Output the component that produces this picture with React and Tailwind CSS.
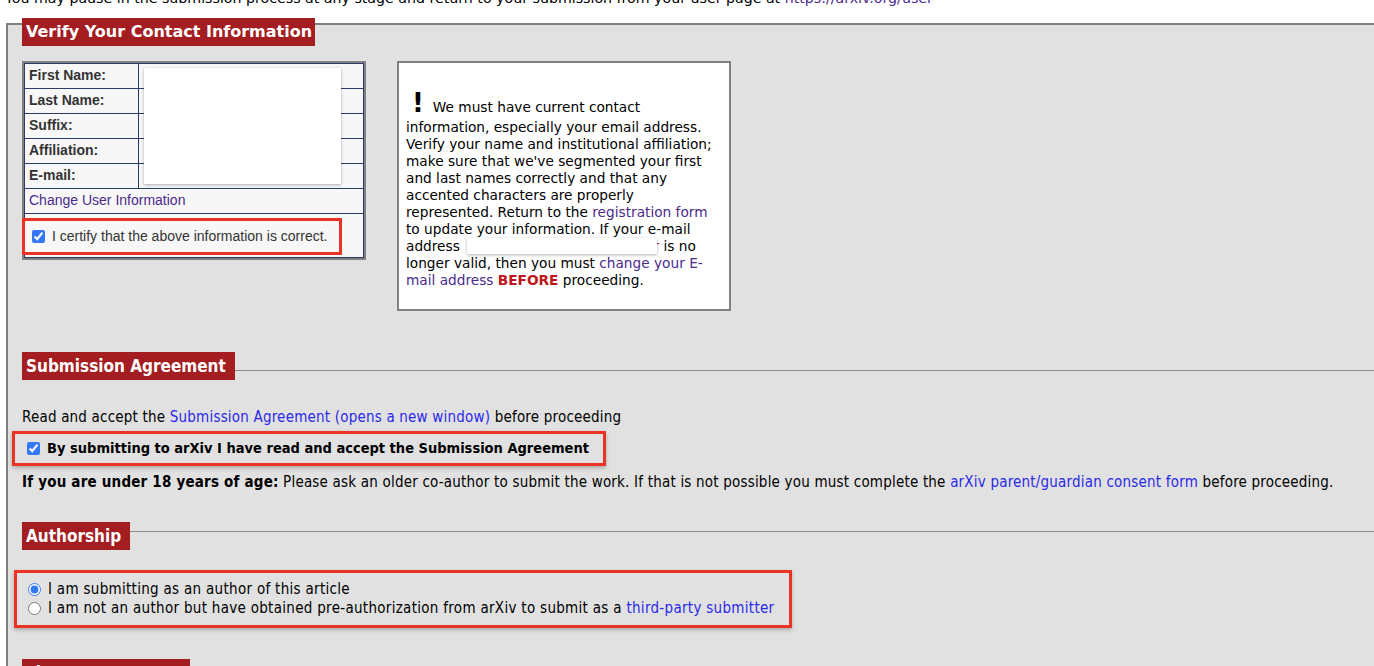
import React from 'react'

const lucida = "font-['DejaVu_Sans',sans-serif]"
const helv = "font-['Liberation_Sans',Arial,sans-serif]"
const cond = "font-['DejaVu_Sans_Condensed','DejaVu_Sans',sans-serif] [font-stretch:condensed]"

const Legend = ({ children, className = '' }) => (
	<div
		className={`h-[28px] shrink-0 whitespace-nowrap bg-[#a41d21] px-[4px] text-[17px] font-bold leading-[28px] tracking-normal text-white ${cond} ${className}`}
	>
		{children}
	</div>
)

const SectionHead = ({ title, width, lineTop }) => (
	<div className="flex items-start">
		<Legend className={width}>{title}</Legend>
		<div className={`flex-1 border-t border-[#8c8c8c] ${lineTop}`} />
	</div>
)

const labels = ['First Name:', 'Last Name:', 'Suffix:', 'Affiliation:', 'E-mail:']

const ContactTable = () => (
	<div className={`relative w-[344px] shrink-0 border-2 border-[#808080] bg-[#f7f7f7] ${helv}`}>
		<div className="border border-[#2d3b68]">
			{labels.map((label) => (
				<div key={label} className="flex h-[25px] border-b border-[#2d3b68]">
					<div className="w-[114px] border-r border-[#2d3b68] pl-[4px] text-[14px] font-bold leading-[23px] text-[#333]">
						{label}
					</div>
					<div className="flex-1" />
				</div>
			))}
			<div className="h-[25px] border-b border-[#2d3b68] pl-[4px] text-[14px] leading-[23px]">
				<a href="#" className="text-[#4b2a8c]">Change User Information</a>
			</div>
			<div className="h-[43px] pt-[4px]">
				<label className="-ml-[3px] flex h-[37px] w-[320px] items-center gap-[7px] border-[3px] border-[#ea3323] pl-[7px] text-[14px] text-[#333]">
					<input type="checkbox" checked readOnly className="m-0 h-[13px] w-[13px] accent-[#3478f6]" />
					I certify that the above information is correct.
				</label>
			</div>
		</div>
		{/* redacted values */}
		<div className="absolute left-[120px] top-[5px] h-[116px] w-[197px] bg-white shadow-[0_1px_3px_rgba(0,0,0,0.3)]" />
	</div>
)

const Notice = () => (
	<div className={`ml-[31px] h-[250px] w-[334px] shrink-0 border-2 border-[#808080] bg-white pl-[7px] pt-[24px] ${lucida}`}>
		<p className="w-[316px] text-[13.7px] leading-[17px] text-black">
			<span className="ml-[6px] mr-[9px] text-[26px] font-bold leading-[32px]">!</span>
			We must have current contact information, especially your email address. Verify your name and
			institutional affiliation; make sure that we've segmented your first and last names correctly and
			that any accented characters are properly represented. Return to the{' '}
			<a href="#" className="text-[#4b2a8c]">registration form</a> to update your information. If your
			e-mail address{' '}
			<span className="relative inline-block w-[195px] text-right text-[#c0161b]">
				r
				<span className="absolute left-[3px] top-0 h-[16px] w-[190px] bg-white shadow-[0_1px_3px_rgba(0,0,0,0.3)]" />
			</span>{' '}
			is no longer valid, then you must{' '}
			<a href="#" className="text-[#4b2a8c]">change your E-mail address</a>{' '}
			<b className="text-[#c0161b]">BEFORE</b> proceeding.
		</p>
	</div>
)

export default function App() {
	return (
		<div className="h-[666px] w-full overflow-hidden bg-white text-black">
			<p className={`-mt-[10px] ml-[5px] whitespace-nowrap text-[14.2px] leading-[17px] ${lucida}`}>
				You may pause in the submission process at any stage and return to your submission from your user
				page at <a href="#" className="text-[#4b2a8c]">https://arxiv.org/user</a>
			</p>

			<div className="ml-[6px] mt-[16px] w-[1400px] border-2 border-[#808080] bg-[#e1e1e1] pl-[14px] pb-[40px]">
				<div className={`-mt-[7px] h-[28px] w-[293px] whitespace-nowrap bg-[#a41d21] px-[4px] text-[16px] font-bold leading-[28px] text-white ${lucida}`}>
					Verify Your Contact Information
				</div>

				<div className="mt-[15px] flex items-start">
					<ContactTable />
					<Notice />
				</div>

				<div className="mt-[41px]">
					<SectionHead title="Submission Agreement" width="w-[213px]" lineTop="mt-[18px]" />
				</div>

				<div className={`${cond} text-[15px] tracking-[0.2px] text-black`}>
					<p className="mt-[29px] leading-[17px]">
						Read and accept the{' '}
						<a href="#" className="text-[#2a2ae8]">Submission Agreement (opens a new window)</a> before
						proceeding
					</p>

					<label className="-ml-[10px] mt-[5px] flex h-[35px] w-[594px] items-center gap-[7px] whitespace-nowrap border-[3px] border-[#ea3323] pl-[12px] text-[14.5px] font-bold tracking-normal shadow-[0_2px_4px_rgba(0,0,0,0.25)]">
						<input type="checkbox" checked readOnly className="m-0 h-[13px] w-[13px] accent-[#3478f6]" />
						By submitting to arXiv I have read and accept the Submission Agreement
					</label>

					<p className="mt-[8px] whitespace-nowrap leading-[17px]">
						<b>If you are under 18 years of age:</b> Please ask an older co-author to submit the work. If that is
						not possible you must complete the{' '}
						<a href="#" className="text-[#2a2ae8]">arXiv parent/guardian consent form</a> before proceeding.
					</p>

					<div className="mt-[31px]">
						<SectionHead title="Authorship" width="w-[108px]" lineTop="mt-[9px]" />
					</div>

					<div className="-ml-[8px] mt-[20px] flex h-[58px] w-[778px] flex-col justify-center whitespace-nowrap border-[3px] border-[#ea3323] pl-[11px] tracking-[0.3px] shadow-[0_2px_4px_rgba(0,0,0,0.25)]">
						<label className="flex h-[19px] items-center gap-[7px]">
							<input type="radio" name="author" checked readOnly className="m-0 h-[13px] w-[13px] accent-[#3478f6]" />
							I am submitting as an author of this article
						</label>
						<label className="flex h-[19px] items-center gap-[7px]">
							<input type="radio" name="author" readOnly className="m-0 h-[13px] w-[13px] accent-[#3478f6]" />
							<span>
								I am not an author but have obtained pre-authorization from arXiv to submit as a{' '}
								<a href="#" className="text-[#2a2ae8]">third-party submitter</a>
							</span>
						</label>
					</div>

					<div className="mt-[31px]">
						<SectionHead title="License" width="w-[168px]" lineTop="mt-[14px]" />
					</div>
				</div>
			</div>
		</div>
	)
}
